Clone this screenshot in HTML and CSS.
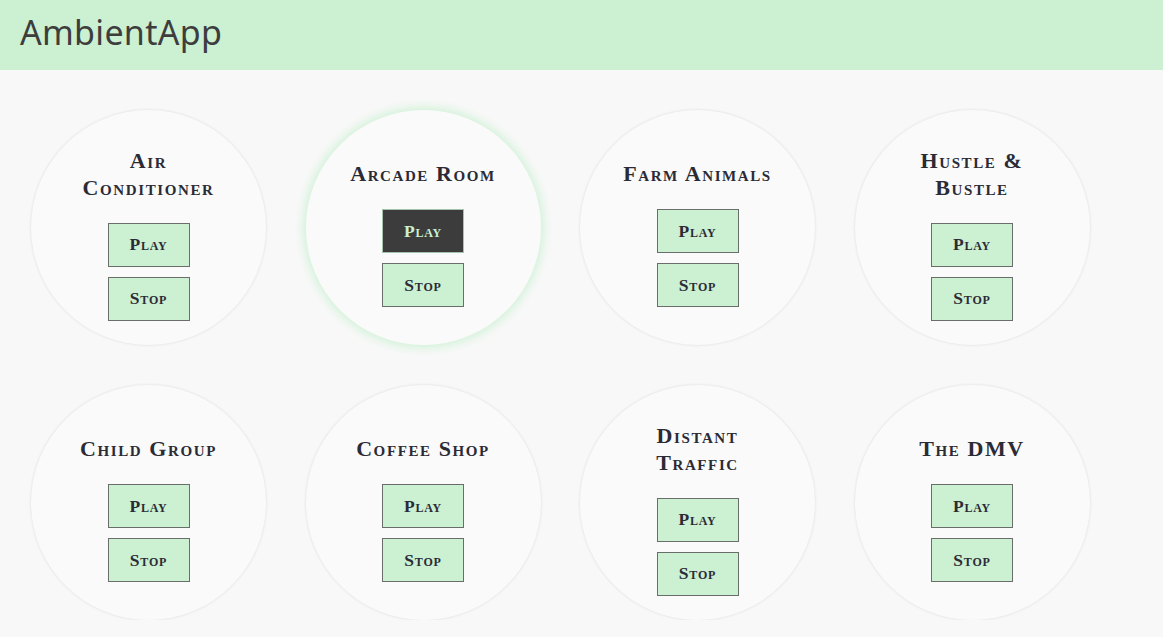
FILE: index.html
```html
<!DOCTYPE html>
<html>
<head>
<meta charset="utf-8">
<link rel="stylesheet" href="styles.css">
</head>
<body>
<header class="topbar"><h1 class="brand">AmbientApp</h1></header>
<main class="grid">
  <section class="sound"><h2 class="name">Air Conditioner</h2><button class="btn">Play</button><button class="btn">Stop</button></section>
  <section class="sound playing"><h2 class="name">Arcade Room</h2><button class="btn active">Play</button><button class="btn">Stop</button></section>
  <section class="sound"><h2 class="name">Farm Animals</h2><button class="btn">Play</button><button class="btn">Stop</button></section>
  <section class="sound"><h2 class="name">Hustle &amp; Bustle</h2><button class="btn">Play</button><button class="btn">Stop</button></section>
  <section class="sound"><h2 class="name">Child Group</h2><button class="btn">Play</button><button class="btn">Stop</button></section>
  <section class="sound"><h2 class="name">Coffee Shop</h2><button class="btn">Play</button><button class="btn">Stop</button></section>
  <section class="sound"><h2 class="name">Distant Traffic</h2><button class="btn">Play</button><button class="btn">Stop</button></section>
  <section class="sound"><h2 class="name">The DMV</h2><button class="btn">Play</button><button class="btn">Stop</button></section>
</main>
</body>
</html>
```

FILE: styles.css
```css
html, body {
  margin: 0;
  padding: 0;
  background: #f8f8f8;
}
.topbar {
  background: #cbf0d2;
  height: 70px;
  box-sizing: border-box;
  padding: 10px 0 0 20px;
}
.brand {
  margin: 0;
  font-family: "Noto Sans", sans-serif;
  font-weight: 400;
  font-size: 34px;
  line-height: 44px;
  color: #3d3d3d;
  letter-spacing: 0.3px;
}
.grid {
  display: grid;
  grid-template-columns: repeat(4, 235px);
  column-gap: 39.5px;
  row-gap: 40px;
  padding: 40px 0 0 31px;
}
.sound {
  width: 235px;
  height: 235px;
  border-radius: 50%;
  background: #fafafa;
  box-shadow: 0 0 3px rgba(0, 0, 0, 0.12);
  display: flex;
  flex-direction: column;
  align-items: center;
  justify-content: center;
  box-sizing: border-box;
  padding-top: 12px;
}
.sound.playing {
  box-shadow: 0 0 10px 3px #d2f2d8;
}
.name {
  margin: 0 0 22px 0;
  font-family: "Liberation Serif", "DejaVu Serif", serif;
  font-variant: small-caps;
  font-weight: 700;
  font-size: 22px;
  line-height: 27px;
  letter-spacing: 1.6px;
  color: #2b2b36;
  text-align: center;
  max-width: 158px;
}
.btn {
  width: 82px;
  height: 44px;
  margin: 0;
  background: #cbf0d2;
  border: 1px solid #6a6e6a;
  font-family: "Liberation Serif", "DejaVu Serif", serif;
  font-variant: small-caps;
  font-weight: 700;
  font-size: 17.5px;
  letter-spacing: 0.8px;
  color: #2b2b36;
  padding: 0;
}
.btn + .btn {
  margin-top: 10px;
}
.btn.active {
  background: #3c3c3c;
  color: #cbf0d2;
  border-color: #a5c2ab;
}
```
